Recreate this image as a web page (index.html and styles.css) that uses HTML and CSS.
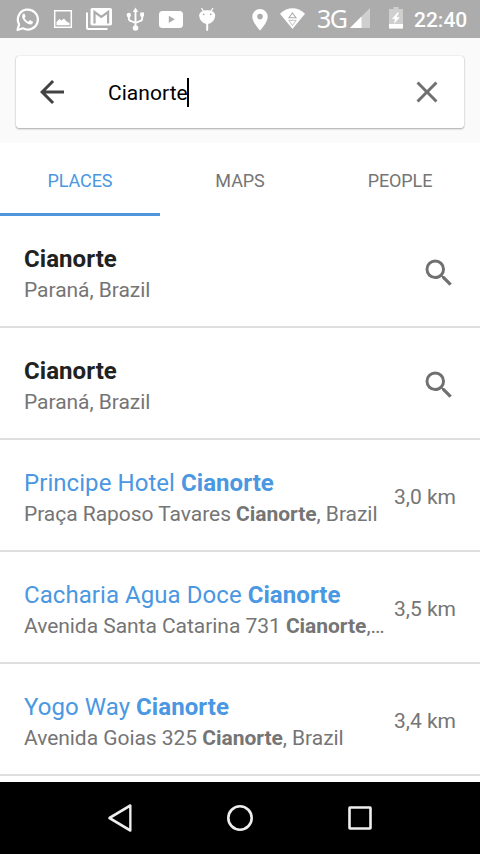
FILE: index.html
```html
<!DOCTYPE html>
<html lang="en">
<head>
<meta charset="utf-8">
<title>Search</title>
<link rel="stylesheet" href="styles.css">
</head>
<body>
<div class="screen">
  <header class="status">
    <svg width="46" height="38" viewBox="0 0 46 38"><path d="M17.500 30l1.600-5.600A10 10 0 1 1 23 28.300z" fill="none" stroke="#fff" stroke-width="2.200" stroke-linejoin="round"/><path d="M23.700 13.600c-2 .9-2 3.600-.5 6 2 3.200 4.800 5 7.300 4.900 1.500-.1 2.500-1.200 2.500-2.700l-3-1.700-1.700 1.600c-1.900-.8-3.100-2.200-3.800-3.600l1.100-1.500-1-2.900z" fill="#fff"/></svg>
    <svg width="34" height="38" viewBox="46 0 34 38"><path d="M54.700 10.700h16.600v16.600H54.700z" fill="none" stroke="#fff" stroke-width="1.500"/><path d="M56.500 25.300v-3.300l3-3 2 1.500 2.500-2 2.500 3 3 1.500v2.300z" fill="#fff"/></svg>
    <svg width="38" height="38" viewBox="80 0 38 38"><path d="M87 12.500V27.500Q87 29 88.500 29H107.500" fill="none" stroke="#fff" stroke-width="2"/><rect x="90.500" y="8" width="21.500" height="17.500" rx="1.800" fill="#fff"/><path d="M94.500 23.500V12l6.800 5 6.800-5v11.500" fill="none" stroke="#acacac" stroke-width="2.200"/></svg>
    <svg width="34" height="38" viewBox="118 0 34 38"><path d="M135.500 12v15M128.800 15.500v3q0 2 2 2.500l4.700 2 4.700-2q2-.5 2-2.500v-3" fill="none" stroke="#fff" stroke-width="1.900"/><path d="M135.500 7.500l2.700 4.500h-5.400z" fill="#fff"/><circle cx="128.800" cy="15" r="2.200" fill="#fff"/><path d="M140.200 12.500h3.800v4h-3.800z" fill="#fff"/><circle cx="135.500" cy="28" r="2.800" fill="#fff"/></svg>
    <svg width="38" height="38" viewBox="152 0 38 38"><rect x="159" y="11" width="24" height="17" rx="3.500" fill="#fff"/><path d="M168.800 15.700v7.200l6-3.600z" fill="#acacac"/></svg>
    <svg width="36" height="38" viewBox="190 0 36 38"><path d="M201.500 8l2.500 4M213 8l-2.500 4" stroke="#fff" stroke-width="1.300"/><path d="M199.200 15.500c0-7 16-7 16 0 0 4-3.500 8.500-8 8.500s-8-4.500-8-8.500z" fill="#fff"/><path d="M207.200 23v7" stroke="#fff" stroke-width="2" stroke-linecap="round"/><circle cx="203.700" cy="14.300" r=".9" fill="#acacac"/><circle cx="210.700" cy="14.300" r=".9" fill="#acacac"/></svg>
    <svg class="push" width="32" height="38" viewBox="244 0 32 38"><path fill-rule="evenodd" d="M260 9a7.700 7.700 0 0 0-7.700 7.700C252.300 22.500 260 30.500 260 30.500s7.700-8 7.700-13.800A7.700 7.700 0 0 0 260 9zm0 4.800a2.800 2.800 0 1 1 0 5.600 2.800 2.800 0 0 1 0-5.600z" fill="#fff"/></svg>
    <svg width="40" height="38" viewBox="276 0 40 38"><path d="M280 13.700Q292.500 2.800 305 13.700L292.500 29z" fill="#fff"/><path d="M292.500 13l3.500 4.800h-7z" fill="#fff" stroke="#acacac" stroke-width="1.100"/><path d="M288.800 20.300h7.400l-3.700 5.200z" fill="none" stroke="#bbb" stroke-width=".9"/></svg>
    <span class="network">3G</span>
    <svg width="26" height="38" viewBox="346 0 26 38"><path d="M370 8v20h-20z" fill="#cfcfcf"/><path d="M361.500 16.500V28H350z" fill="#fff"/></svg>
    <svg width="40" height="38" viewBox="372 0 40 38"><path d="M393.500 7h5v2h4.500v19.500h-14V9h4.500z" fill="#cfcfcf"/><path d="M389 24h14v4.500h-14z" fill="#fff"/><path d="M397.500 12.500l-5.500 6.500h3l-1 5 5.700-6.700h-3.200l2.500-4.800z" fill="#fff"/></svg>
    <span class="clock">22:40</span>
  </header>

  <div class="search-area">
    <div class="search-box">
      <svg width="36" height="36" viewBox="0 0 24 24" fill="#424242"><path d="M20 11H7.830l5.590-5.590L12 4l-8 8 8 8 1.410-1.410L7.830 13H20v-2z"/></svg>
      <div class="query"><span>Cianorte</span><i class="caret"></i></div>
      <svg width="36" height="36" viewBox="0 0 24 24" fill="#707070"><path d="M19 6.410L17.590 5 12 10.590 6.410 5 5 6.410 10.590 12 5 17.590 6.410 19 12 13.410 17.590 19 19 17.590 13.410 12z"/></svg>
    </div>
  </div>

  <nav class="tabs">
    <div class="tab active">PLACES</div>
    <div class="tab">MAPS</div>
    <div class="tab">PEOPLE</div>
  </nav>

  <main class="results">
    <div class="row">
      <div class="info"><div class="name"><b>Cianorte</b></div><div class="address">Paraná, Brazil</div></div>
      <svg class="lens" width="36" height="36" viewBox="0 0 24 24"><path d="M15.500 14h-.79l-.28-.27A6.471 6.471 0 0 0 16 9.500 6.500 6.500 0 1 0 9.500 16c1.610 0 3.090-.59 4.230-1.570l.27.28v.79l5 4.990L20.490 19l-4.990-5zm-6 0C7.010 14 5 11.990 5 9.500S7.010 5 9.500 5 14 7.010 14 9.500 11.990 14 9.500 14z"/></svg>
    </div>
    <div class="row">
      <div class="info"><div class="name"><b>Cianorte</b></div><div class="address">Paraná, Brazil</div></div>
      <svg class="lens" width="36" height="36" viewBox="0 0 24 24"><path d="M15.500 14h-.79l-.28-.27A6.471 6.471 0 0 0 16 9.500 6.500 6.500 0 1 0 9.500 16c1.610 0 3.090-.59 4.230-1.570l.27.28v.79l5 4.990L20.490 19l-4.990-5zm-6 0C7.010 14 5 11.990 5 9.500S7.010 5 9.500 5 14 7.010 14 9.500 11.990 14 9.500 14z"/></svg>
    </div>
    <div class="row">
      <div class="info"><div class="name place">Principe Hotel <b>Cianorte</b></div><div class="address">Praça Raposo Tavares <b>Cianorte</b>, Brazil</div></div>
      <div class="distance">3,0 km</div>
    </div>
    <div class="row">
      <div class="info"><div class="name place">Cacharia Agua Doce <b>Cianorte</b></div><div class="address">Avenida Santa Catarina 731 <b>Cianorte</b>,…</div></div>
      <div class="distance">3,5 km</div>
    </div>
    <div class="row">
      <div class="info"><div class="name place">Yogo Way <b>Cianorte</b></div><div class="address">Avenida Goias 325 <b>Cianorte</b>, Brazil</div></div>
      <div class="distance">3,4 km</div>
    </div>
  </main>

  <footer class="navbar">
    <svg width="36" height="36" viewBox="0 0 36 36"><path d="M7.500 18L30.500 5.500v25z" transform="matrix(.91 0 0 1 .6 0)"/></svg>
    <svg width="36" height="36" viewBox="0 0 36 36"><circle cx="18" cy="18" r="11.700"/></svg>
    <svg width="36" height="36" viewBox="0 0 36 36"><rect x="7.500" y="7.500" width="21" height="21" rx=".5"/></svg>
  </footer>
</div>
</body>
</html>
```
FILE: styles.css
```css
* { box-sizing: border-box; }
body {
  margin: 0;
  font-family: Roboto, "Liberation Sans", sans-serif;
  background: #fff;
}
svg { display: block; flex: none; }
.screen {
  width: 480px;
  height: 854px;
  display: flex;
  flex-direction: column;
  overflow: hidden;
}
.status {
  height: 38px;
  flex: none;
  display: flex;
  align-items: center;
  background: #acacac;
  color: #fff;
  white-space: nowrap;
}
.push { margin-left: 18px; }
.network {
  width: 30px;
  padding: 0 0 2px 1px;
  font-family: "Noto Sans", sans-serif;
  font-size: 25px;
  line-height: 36px;
  letter-spacing: -1.500px;
}
.clock {
  padding: 2px 0 0 2px;
  font-size: 21px;
  font-weight: 500;
  line-height: 36px;
}
.search-area {
  height: 105px;
  flex: none;
  padding: 18px 16px 15px;
  background: #fafafa;
}
.search-box {
  height: 72px;
  display: flex;
  align-items: center;
  padding: 0 19px 0 18px;
  background: #fff;
  border-radius: 3px;
  box-shadow: 0 1px 2px rgba(0, 0, 0, .3), 0 0 1px rgba(0, 0, 0, .3);
}
.query {
  flex: 1;
  display: flex;
  align-items: center;
  padding-left: 38px;
  font-size: 21px;
  color: #000;
}
.query span {
  padding-top: 2px;
  letter-spacing: .05px;
}
.caret {
  width: 2px;
  height: 29px;
  margin-left: -1px;
  background: #000;
}
.tabs {
  height: 73px;
  flex: none;
  display: flex;
}
.tab {
  flex: 1;
  padding-top: 3px;
  border-bottom: 3px solid transparent;
  text-align: center;
  font-size: 18px;
  line-height: 70px;
  letter-spacing: -.1px;
  color: #757575;
}
.tab.active {
  color: #4a97e2;
  border-color: #4f97dc;
}
.results {
  flex: 1;
  min-height: 0;
  overflow: hidden;
}
.row {
  height: 112px;
  display: flex;
  align-items: center;
  justify-content: space-between;
  padding: 3px 24px 0;
  border-bottom: 2px solid #dedede;
}
.info {
  padding-top: 2px;
  white-space: nowrap;
}
.name {
  font-size: 24px;
  line-height: 32px;
  letter-spacing: .06px;
  color: #212121;
}
.name.place { color: #4a97e2; }
.address {
  font-size: 21px;
  line-height: 30px;
  letter-spacing: -.04px;
  color: #757575;
}
.distance {
  font-size: 21px;
  line-height: 30px;
  color: #757575;
  white-space: nowrap;
}
.lens {
  margin-right: -1px;
  fill: #707070;
}
.navbar {
  height: 72px;
  flex: none;
  display: flex;
  align-items: center;
  justify-content: center;
  gap: 84px;
  background: #000;
}
.navbar svg {
  fill: none;
  stroke: #eee;
  stroke-width: 2.600;
  stroke-linejoin: round;
}
```
